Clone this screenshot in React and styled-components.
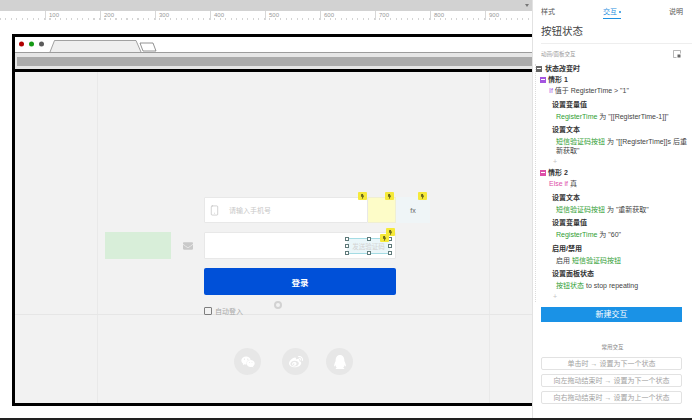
import React from 'react'
import styled, { createGlobalStyle } from 'styled-components'
import { FaEnvelope, FaWeixin, FaWeibo, FaQq, FaBolt } from 'react-icons/fa'
import { Smartphone } from 'lucide-react'

const GlobalStyle = createGlobalStyle`
  html, body { margin: 0; padding: 0; background: #fff; }
  body {
    width: 692px;
    height: 420px;
    overflow: hidden;
    font-family: "Liberation Sans", "Noto Sans CJK SC", sans-serif;
  }
`

const Page = styled.div`
  width: 692px;
  height: 420px;
  display: grid;
  grid-template-columns: 532px 160px;
  grid-template-rows: 418px 2px;
`

const BottomEdge = styled.div`
  grid-column: 1 / 3;
  background: #222;
`

const Workspace = styled.div`
  display: flex;
  flex-direction: column;
  overflow: hidden;
`

const TopBar = styled.div`
  height: 11px;
  flex: none;
  box-sizing: border-box;
  padding: 4px 3px 0 0;
  display: flex;
  justify-content: flex-end;
  background: #d2d2d2;
`

const DropArrow = styled.span`
  width: 0;
  height: 0;
  border-left: 2.5px solid transparent;
  border-right: 2.5px solid transparent;
  border-top: 3px solid #777;
`

const Ruler = styled.div`
  height: 9px;
  flex: none;
  display: flex;
  padding-left: 45px;
  background: repeating-linear-gradient(90deg, #d4d4d4 0 1px, transparent 1px 5.5px) 0 7px / 100% 2px no-repeat;
`

const RulerCell = styled.div`
  flex: none;
  width: 55px;
  box-sizing: border-box;
  padding: 1px 0 0 3px;
  border-left: 1px solid #d8d8d8;
  font-size: 6px;
  line-height: 6px;
  color: #999;
`

const Stage = styled.div`
  flex: 1;
  padding: 14px 0 0 12px;
  overflow: hidden;
`

const BrowserFrame = styled.div`
  width: 560px;
  height: 372px;
  box-sizing: border-box;
  border: 3px solid #000;
  display: flex;
  flex-direction: column;
`

const TabStrip = styled.div`
  height: 15px;
  flex: none;
  background: #fff;
  border-bottom: 1px solid #9c9c9c;
`

const AddressArea = styled.div`
  height: 16px;
  flex: none;
  box-sizing: border-box;
  padding: 4px 0 3px 2px;
  background: #e6e6e6;
`

const AddressBar = styled.div`
  height: 9px;
  background: #ababab;
`

const FrameRule = styled.div`
  height: 3px;
  flex: none;
  background: #000;
`

const Content = styled.div`
  flex: 1;
  position: relative;
  background: #f2f2f2;
`

const GuideV = styled.div`
  position: absolute;
  top: 0;
  bottom: 0;
  left: ${p => p.$x}px;
  width: 1px;
  background: #e9e9e9;
`

const GuideH = styled.div`
  position: absolute;
  left: 0;
  right: 0;
  top: 242px;
  height: 1px;
  background: #e6e6e6;
`

const Widget = styled.div`
  position: absolute;
  left: ${p => p.$x}px;
  top: ${p => p.$y}px;
  width: ${p => p.$w}px;
  height: ${p => p.$h}px;
  box-sizing: border-box;
`

const InputBox = styled(Widget)`
  background: #fff;
  border: 1px solid #e8e8e8;
  display: flex;
  align-items: center;
  padding-left: 4px;
  gap: 9px;
  font-size: 7px;
  color: #c8c8c8;
  border-radius: 1px;
`

const YellowBox = styled(Widget)`
  background: #fdfcc8;
  border: 1px solid #f0efd2;
  border-left: 0;
`

const FormulaBox = styled(Widget)`
  background: #eff5f7;
  display: flex;
  align-items: center;
  justify-content: center;
  font-size: 7px;
  color: #666;
`

const GreenBox = styled(Widget)`
  background: #d8eed9;
`

const MailIcon = styled(Widget)`
  color: #c9c9c9;
  display: flex;
  align-items: center;
  justify-content: center;
  font-size: 10px;
`

const LoginButton = styled(Widget)`
  background: #0050d8;
  border-radius: 2px;
  color: #fff;
  font-size: 8.5px;
  font-weight: 700;
  display: flex;
  align-items: center;
  justify-content: center;
`

const Marker = styled(Widget)`
  width: 9px;
  height: 8px;
  background: #f5e93a;
  color: #5f5e1c;
  font-size: 5px;
  display: flex;
  align-items: center;
  justify-content: center;
  border-radius: 1px;
`

const SelectedText = styled(Widget)`
  background: #eaf6f9;
  border-top: 1px solid #a4dce4;
  border-bottom: 1px solid #a4dce4;
  font-size: 6.5px;
  color: #d2d2d2;
  display: flex;
  align-items: center;
  justify-content: center;
`

const Handle = styled.i`
  position: absolute;
  left: ${p => p.$l}%;
  top: ${p => p.$t}%;
  width: 2px;
  height: 2px;
  margin: -2px 0 0 -2px;
  background: #fff;
  border: 1px solid #5f7a7a;
`

const AutoLogin = styled(Widget)`
  display: flex;
  align-items: center;
  gap: 3px;
  font-size: 7px;
  color: #a8a8a8;
`

const CheckBox = styled.span`
  width: 6px;
  height: 6px;
  flex: none;
  border: 1px solid #7e7e7e;
  border-radius: 1px;
`

const Ring = styled(Widget)`
  border: 2px solid #d2d2d2;
  border-radius: 50%;
`

const SocialCircle = styled(Widget)`
  width: 27px;
  height: 27px;
  border-radius: 50%;
  background: #e7e7e7;
  color: #fff;
  font-size: 14px;
  display: flex;
  align-items: center;
  justify-content: center;
`

const Panel = styled.aside`
  border-left: 1px solid #e2e2e2;
  background: #fff;
  display: flex;
  flex-direction: column;
  color: #444;
  min-width: 0;
`

const Tabs = styled.div`
  height: 21px;
  flex: none;
  box-sizing: border-box;
  padding: 7px 9px 0 8px;
  display: flex;
  justify-content: space-between;
  font-size: 7px;
  line-height: 9px;
`

const Tab = styled.div`
  height: 11px;
  color: ${p => (p.$active ? '#1f8fe0' : '#555')};
  border-bottom: ${p => (p.$active ? '1px solid #1f8fe0' : '0')};
`

const Dot = styled.span`
  display: inline-block;
  width: 2px;
  height: 2px;
  margin-left: 2px;
  vertical-align: middle;
  border-radius: 50%;
  background: #1f8fe0;
`

const Title = styled.div`
  margin: 0 0 0 8px;
  padding-right: 10px;
  height: 22px;
  flex: none;
  font-size: 10.5px;
  line-height: 20px;
  color: #444;
  border-bottom: 1px solid #eee;
`

const SectionBar = styled.div`
  height: 20px;
  flex: none;
  padding: 0 11px 0 8px;
  display: flex;
  align-items: center;
  justify-content: space-between;
  font-size: 5.5px;
  color: #999;
`

const Tree = styled.div`
  margin-left: 2px;
  border-left: 1px dotted #dcdcdc;
  font-size: 7px;
  line-height: 9px;
  height: 238px;
  flex: none;
`

const EventRow = styled.div`
  height: 9px;
  display: flex;
  align-items: center;
  gap: 3px;
  font-weight: 700;
  color: #333;
`

const CaseRow = styled.div`
  margin: 2px 0 0 4px;
  height: 9px;
  display: flex;
  align-items: center;
  gap: 2px;
  font-weight: 700;
  color: #333;
`

const Toggle = styled.span`
  width: 6px;
  height: 6px;
  flex: none;
  background: ${p => p.$color};
  position: relative;
  &::after {
    content: '';
    position: absolute;
    left: 1px;
    right: 1px;
    top: 2.5px;
    height: 1px;
    background: #fff;
  }
`

const Condition = styled.div`
  margin: 2px 0 0 13px;
  white-space: nowrap;
`

const Keyword = styled.span`
  color: ${p => p.$color};
`

const ActionTitle = styled.div`
  margin: 4.5px 0 0 16px;
  font-weight: 700;
  color: #333;
`

const ActionDetail = styled.div`
  margin: 3px 0 0 20px;
  width: 134px;
`

const Target = styled.span`
  color: #2f9e33;
`

const AddMark = styled.div`
  margin: 2px 0 0 17px;
  color: #c4c4c4;
`

const NewButton = styled.div`
  margin: 5px 10px 0 8px;
  height: 15px;
  flex: none;
  background: #1a92e6;
  color: #fff;
  font-size: 8px;
  line-height: 15px;
  text-align: center;
`

const CommonLabel = styled.div`
  margin-top: 20px;
  height: 10px;
  flex: none;
  font-size: 5.5px;
  line-height: 10px;
  text-align: center;
  color: #888;
`

const CommonList = styled.div`
  margin: 5px 10px 0 8px;
  display: flex;
  flex-direction: column;
  gap: 4px;
`

const CommonButton = styled.div`
  height: 13px;
  box-sizing: border-box;
  border: 1px solid #e2e2e2;
  border-radius: 2px;
  font-size: 7px;
  line-height: 11px;
  text-align: center;
  color: #a2a2a2;
`

const rulerMarks = [100, 200, 300, 400, 500, 600, 700, 800, 900]

const handles = [
  [0, 0], [50, 0], [100, 0],
  [0, 50], [100, 50],
  [0, 100], [50, 100], [100, 100],
]

const commonActions = [
  '单击时 → 设置为下一个状态',
  '向左拖动结束时 → 设置为下一个状态',
  '向右拖动结束时 → 设置为上一个状态',
]

const App = () => (
  <Page>
    <GlobalStyle />
    <Workspace>
      <TopBar><DropArrow /></TopBar>
      <Ruler>
        {rulerMarks.map(mark => <RulerCell key={mark}>{mark}</RulerCell>)}
      </Ruler>
      <Stage>
        <BrowserFrame>
          <TabStrip>
            <svg width="170" height="15" viewBox="0 0 170 15" style={{ display: 'block' }}>
              <circle cx="6.5" cy="7" r="2.5" fill="#b00000" />
              <circle cx="16.5" cy="7" r="2.5" fill="#159a15" />
              <circle cx="26.5" cy="7" r="2.5" fill="#5c5c5c" />
              <path d="M35 15 L39.5 3.5 H121 L126 15" fill="#efefef" stroke="#8a8a8a" strokeWidth="0.8" />
              <path d="M125 6 H138 L141 14 H128 Z" fill="#fff" stroke="#777" strokeWidth="0.8" />
            </svg>
          </TabStrip>
          <AddressArea><AddressBar /></AddressArea>
          <FrameRule />
          <Content>
            <GuideV $x={82} />
            <GuideV $x={474} />
            <GuideH />
            <GreenBox $x={90} $y={160} $w={66} $h={27} />
            <MailIcon $x={167} $y={169} $w={11} $h={9}><FaEnvelope /></MailIcon>
            <InputBox $x={189} $y={125} $w={164} $h={26}>
              <Smartphone size={11} strokeWidth={1.3} color="#b4b4b4" />
              <span>请输入手机号</span>
            </InputBox>
            <YellowBox $x={353} $y={125} $w={28} $h={26} />
            <FormulaBox $x={381} $y={125} $w={34} $h={26}>fx</FormulaBox>
            <InputBox $x={189} $y={160} $w={192} $h={27} />
            <SelectedText $x={332} $y={166} $w={43} $h={16}>
              发送验证码
              {handles.map(([l, t]) => <Handle key={`${l}-${t}`} $l={l} $t={t} />)}
            </SelectedText>
            <Marker $x={343} $y={120}><FaBolt /></Marker>
            <Marker $x={370} $y={120}><FaBolt /></Marker>
            <Marker $x={403} $y={120}><FaBolt /></Marker>
            <Marker $x={365} $y={162}><FaBolt /></Marker>
            <Marker $x={371} $y={156}><FaBolt /></Marker>
            <LoginButton $x={189} $y={196} $w={192} $h={27}>登录</LoginButton>
            <AutoLogin $x={189} $y={235} $w={60} $h={8}>
              <CheckBox />
              <span>自动登入</span>
            </AutoLogin>
            <Ring $x={259} $y={229} $w={8} $h={8} />
            <SocialCircle $x={219} $y={276}><FaWeixin /></SocialCircle>
            <SocialCircle $x={267} $y={276}><FaWeibo /></SocialCircle>
            <SocialCircle $x={311} $y={276}><FaQq /></SocialCircle>
          </Content>
        </BrowserFrame>
      </Stage>
    </Workspace>
    <Panel>
      <Tabs>
        <Tab>样式</Tab>
        <Tab $active>交互<Dot /></Tab>
        <Tab>说明</Tab>
      </Tabs>
      <Title>按钮状态</Title>
      <SectionBar>
        <span>动画/面板交互</span>
        <svg width="8" height="8" viewBox="0 0 8 8">
          <path d="M7.5 3.5 V0.5 H0.5 V7.5 H3.5" fill="none" stroke="#999" strokeWidth="0.7" />
          <rect x="4.5" y="4.5" width="3" height="3" fill="#666" />
        </svg>
      </SectionBar>
      <Tree>
        <EventRow><Toggle $color="#666" />状态改变时</EventRow>
        <CaseRow><Toggle $color="#a555e0" />情形 1</CaseRow>
        <Condition><Keyword $color="#a555e0">If</Keyword> 值于 RegisterTime &gt; "1"</Condition>
        <ActionTitle>设置变量值</ActionTitle>
        <ActionDetail><Target>RegisterTime</Target> 为 "[[RegisterTime-1]]"</ActionDetail>
        <ActionTitle>设置文本</ActionTitle>
        <ActionDetail><Target>短信验证码按钮</Target> 为 "[[RegisterTime]]s 后重<br />新获取"</ActionDetail>
        <AddMark>+</AddMark>
        <CaseRow><Toggle $color="#dd4fa8" />情形 2</CaseRow>
        <Condition><Keyword $color="#dd4fa8">Else if</Keyword> 真</Condition>
        <ActionTitle>设置文本</ActionTitle>
        <ActionDetail><Target>短信验证码按钮</Target> 为 "重新获取"</ActionDetail>
        <ActionTitle>设置变量值</ActionTitle>
        <ActionDetail><Target>RegisterTime</Target> 为 "60"</ActionDetail>
        <ActionTitle>启用/禁用</ActionTitle>
        <ActionDetail>启用 <Target>短信验证码按钮</Target></ActionDetail>
        <ActionTitle>设置面板状态</ActionTitle>
        <ActionDetail><Target>按钮状态</Target> to stop repeating</ActionDetail>
        <AddMark>+</AddMark>
      </Tree>
      <NewButton>新建交互</NewButton>
      <CommonLabel>常用交互</CommonLabel>
      <CommonList>
        {commonActions.map(text => <CommonButton key={text}>{text}</CommonButton>)}
      </CommonList>
    </Panel>
    <BottomEdge />
  </Page>
)

export default App
